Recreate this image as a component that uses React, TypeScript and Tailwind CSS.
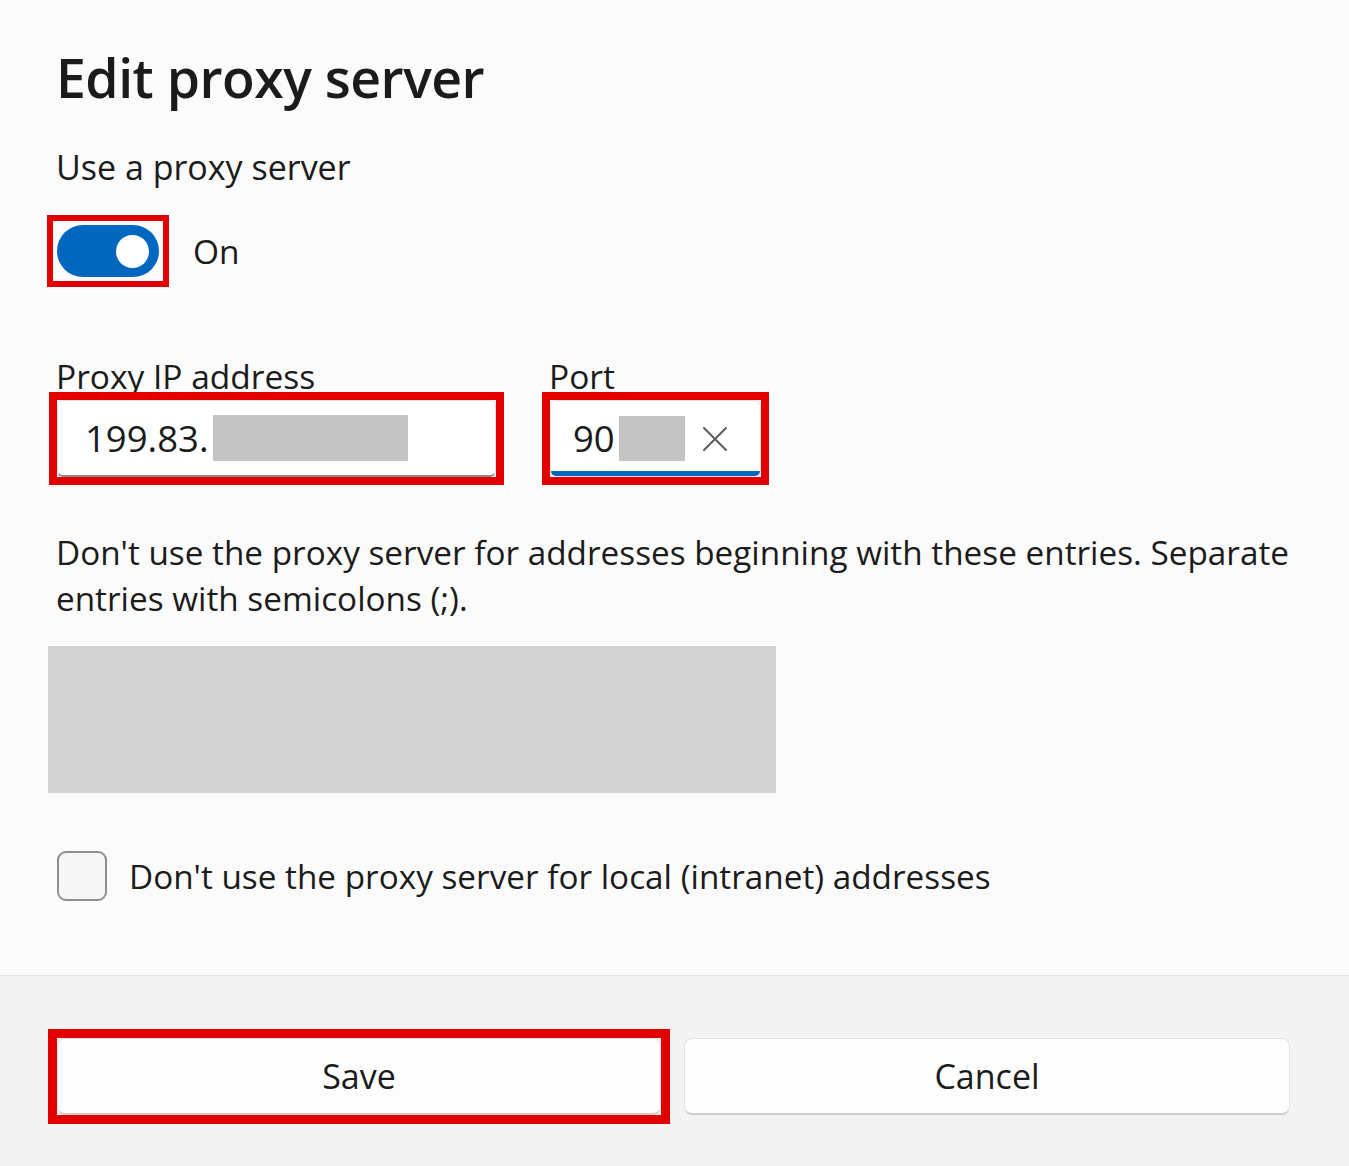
const font = { fontFamily: '"Open Sans", "Noto Sans", sans-serif' };

// 截图里的红框是标注，方角，所以套在无圆角的外层上
function Marked({ children, className = "" }: { children: React.ReactNode; className?: string }) {
  return <div className={`outline-solid outline-[#e30000] ${className}`}>{children}</div>;
}

function Toggle() {
  return (
    <div className="flex h-[52px] w-[102px] items-center justify-end rounded-full bg-[#0067c0] pr-[10px]">
      <div className="h-[33px] w-[33px] rounded-full bg-white" />
    </div>
  );
}

function Redacted({ className }: { className: string }) {
  return <div className={`bg-[#c4c4c4] ${className}`} />;
}

function ClearIcon() {
  return (
    <svg className="ml-[17px] h-[26px] w-[26px] text-[#5c5c5c]" viewBox="0 0 26 26" fill="none">
      <path d="M2 2L24 24M24 2L2 24" stroke="currentColor" strokeWidth="2" strokeLinecap="round" />
    </svg>
  );
}

export default function App() {
  return (
    <div className="flex min-h-[1166px] w-full flex-col bg-[#fbfbfb] text-[#1b1b1b]" style={font}>
      <div className="flex flex-col px-[57px] pt-[38px]">
        <h1 className="-ml-[1px] text-[53.5px] leading-[80px] font-semibold tracking-[-0.5px]">
          Edit proxy server
        </h1>

        <div className="mt-[25px] -ml-[1px] text-[34px] leading-[48px]">Use a proxy server</div>

        <div className="mt-[34px] flex items-center gap-[34px]">
          <Marked className="outline-[6px] outline-offset-[4px]">
            <Toggle />
          </Marked>
          <span className="text-[33.5px] leading-[48px]">On</span>
        </div>

        <div className="mt-[75px] flex gap-[54px]">
          <div className="flex flex-col">
            <label className="-ml-[1px] text-[33.5px] leading-[48px]">Proxy IP address</label>
            <Marked className="outline-[8px]">
              <div className="flex h-[77px] w-[439px] items-center rounded-[6px] border border-b-2 border-[#e2e2e2] border-b-[#8a8a8a] bg-white pl-[27px]">
                <span className="text-[36.5px]">199.83.</span>
                <Redacted className="ml-[4px] h-[46px] w-[195px]" />
              </div>
            </Marked>
          </div>
          <div className="flex flex-col">
            <label className="-ml-[1px] text-[33.5px] leading-[48px]">Port</label>
            <Marked className="outline-[8px]">
              <div className="relative flex h-[77px] w-[211px] items-center rounded-[6px] border border-[#e2e2e2] bg-white pl-[22px]">
                <span className="text-[36.5px]">90</span>
                <Redacted className="ml-[4px] h-[45px] w-[66px]" />
                <ClearIcon />
                <div className="absolute right-0 bottom-0 left-0 h-[5px] rounded-b-[6px] bg-[#0067c0]" />
              </div>
            </Marked>
          </div>
        </div>

        <p className="mt-[52px] -ml-[1px] text-[33.3px] leading-[46px] whitespace-nowrap">
          Don't use the proxy server for addresses beginning with these entries. Separate
          <br />
          entries with semicolons (;).
        </p>

        <div className="mt-[25px] -ml-[9px] h-[147px] w-[728px] bg-[#d3d3d3]" />

        <div className="mt-[58px] flex items-center gap-[22px]">
          <div className="h-[50px] w-[50px] rounded-[9px] border-2 border-[#8f8f8f] bg-[#f6f6f6]" />
          <span className="text-[33.3px] leading-[48px]">
            Don't use the proxy server for local (intranet) addresses
          </span>
        </div>
      </div>

      <div className="mt-[74px] flex flex-1 items-start gap-[23px] border-t border-[#e3e3e3] bg-[#f3f3f3] pt-[62px] pr-[59px] pl-[57px]">
        <Marked className="flex-1 outline-[9px]">
          <button className="block h-[77px] w-full rounded-[8px] border border-b-2 border-[#e3e3e3] border-b-[#cfcfcf] bg-[#fdfdfd] text-[34px]">
            Save
          </button>
        </Marked>
        <button className="h-[77px] flex-1 rounded-[8px] border border-b-2 border-[#e3e3e3] border-b-[#cfcfcf] bg-[#fdfdfd] text-[34px]">
          Cancel
        </button>
      </div>
    </div>
  );
}
